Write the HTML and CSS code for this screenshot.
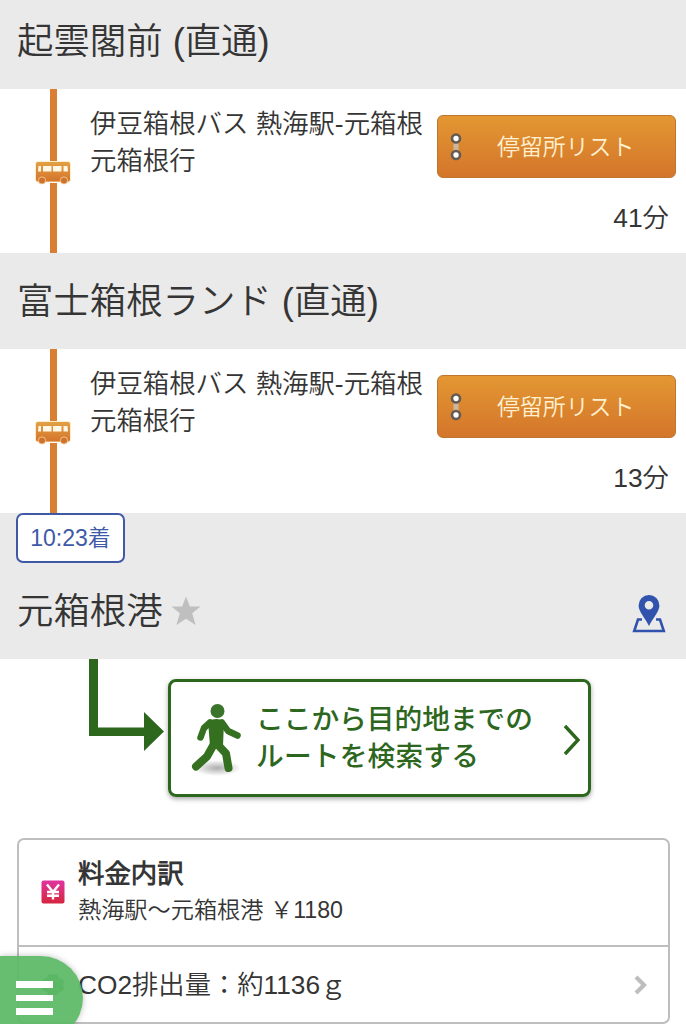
FILE: index.html
```html
<!DOCTYPE html>
<html lang="ja">
<head>
<meta charset="utf-8">
<title>元箱根港</title>
<link rel="stylesheet" href="styles.css">
</head>
<body>
<svg class="defs" width="0" height="0" aria-hidden="true">
  <defs>
    <linearGradient id="busFill" x1="0" y1="0" x2="0" y2="1"><stop offset="0" stop-color="#e3a044"/><stop offset="1" stop-color="#d4742b"/></linearGradient>
    <linearGradient id="yenFill" x1="0" y1="0" x2="0" y2="1"><stop offset="0" stop-color="#e035a0"/><stop offset="1" stop-color="#d5253f"/></linearGradient>
    <radialGradient id="shade"><stop offset="0" stop-color="#000" stop-opacity=".32"/><stop offset="1" stop-color="#000" stop-opacity="0"/></radialGradient>
    <symbol id="bus" viewBox="0 0 38 26">
      <path d="M4 2H34Q36 2 36 4V19.500Q36 21.500 34 21.500H4Q2 21.500 2 19.500V4Q2 2 4 2Z" fill="url(#busFill)" stroke="#fbe8bd" stroke-width="1.600" paint-order="stroke"/>
      <path d="M4.500 6H7V11.500H4ZM9 6H17.500V11.500H9ZM19 6H27.500V11.500H19ZM29.500 6H33.500L34 11.500H29.500Z" fill="#fff8e7"/>
      <g fill="#cf722c" stroke="#f8d5a5" stroke-width=".8"><circle cx="8" cy="20.500" r="3.600"/><circle cx="30" cy="20.500" r="3.600"/></g>
    </symbol>
    <symbol id="stops" viewBox="0 0 12 30">
      <path d="M3.500 6H8.500V24H3.500Z" fill="#cbb8a2"/>
      <g fill="#fff" stroke="#655b50" stroke-width="2.600"><circle cx="6" cy="6.500" r="4"/><circle cx="6" cy="23" r="4"/></g>
    </symbol>
  </defs>
</svg>
<main class="screen">
  <h2 class="station station-first">起雲閣前 (直通)</h2>
  <section class="segment">
    <div class="track"><span class="rail"></span><svg class="bus"><use href="#bus"/></svg><span class="rail rail-end"></span></div>
    <p class="line-name">伊豆箱根バス 熱海駅-元箱根<br>元箱根行</p>
    <div class="side">
      <a class="stop-button"><svg class="stops"><use href="#stops"/></svg><span class="stop-label">停留所リスト</span></a>
      <span class="minutes">41分</span>
    </div>
  </section>
  <h2 class="station">富士箱根ランド (直通)</h2>
  <section class="segment">
    <div class="track"><span class="rail"></span><svg class="bus"><use href="#bus"/></svg><span class="rail rail-end"></span></div>
    <p class="line-name">伊豆箱根バス 熱海駅-元箱根<br>元箱根行</p>
    <div class="side">
      <a class="stop-button"><svg class="stops"><use href="#stops"/></svg><span class="stop-label">停留所リスト</span></a>
      <span class="minutes">13分</span>
    </div>
  </section>
  <section class="arrival">
    <span class="time">10:23着</span>
    <div class="arrival-row">
      <h2 class="arrival-name">元箱根港</h2>
      <svg class="star" viewBox="0 0 30 30"><path d="M15 .5L18.900 10.500H29.500L21.200 17.300L24.600 29L15 22.800L5.400 29L8.800 17.300L.5 10.500H11.100Z" fill="#bfbfbf"/></svg>
      <svg class="map-pin" viewBox="0 0 34 40"><path d="M10 25.500H6L2.200 37H31.800L28 25.500H24" fill="none" stroke="#3253ad" stroke-width="2.600"/><path fill-rule="evenodd" d="M17 1A10.400 10.400 0 0 0 6.600 11.500C6.600 18 14 25 17 32C20 25 27.400 18 27.400 11.500A10.400 10.400 0 0 0 17 1ZM17 7A4.300 4.300 0 1 1 17 15.600A4.300 4.300 0 1 1 17 7Z" fill="#3253ad"/></svg>
    </div>
  </section>
  <section class="onward">
    <svg class="elbow" viewBox="0 0 76 94"><path d="M0 0H9V68.500H55V53L75 72.500L55 92V77H0Z" fill="#2d671e"/></svg>
    <a class="route-search">
      <svg class="walker" viewBox="0 0 54 74">
        <ellipse cx="27" cy="65" rx="24" ry="8" fill="url(#shade)"/>
        <circle cx="27.500" cy="8" r="7" fill="#3b742b"/>
        <path d="M18 18Q27 14 34 18L33 43H20Z" fill="#34701f"/>
        <g fill="none" stroke="#34701f" stroke-linecap="round" stroke-linejoin="round"><path d="M20 19.500L14 25L10.500 34.500" stroke-width="6.500"/><path d="M32 19.500L38 28L47.500 32.500" stroke-width="6.500"/><path d="M24 41L17 53.500L6 63.500M28 42L36 50.500L38.500 65" stroke-width="8"/></g>
      </svg>
      <span class="route-text"><span class="route-line1">ここから目的地までの</span><br><span class="route-line2">ルートを検索する</span></span>
      <svg class="route-arrow" viewBox="0 0 18 32"><path d="M2 2L15 16L2 30" fill="none" stroke="#2d671e" stroke-width="3.400"/></svg>
    </a>
  </section>
  <section class="details">
    <div class="fare">
      <svg class="yen" viewBox="0 0 24 24"><rect x=".5" y=".5" width="23" height="23" rx="2" fill="url(#yenFill)"/><path d="M6 4.500L12 12L18 4.500M12 11V19.500M6 12H18M6 15.800H18" fill="none" stroke="#fff" stroke-width="2.400"/></svg>
      <div><h3 class="fare-title">料金内訳</h3><p class="fare-text">熱海駅〜元箱根港 ￥1180</p></div>
    </div>
    <div class="co2">
      <svg class="leaf" viewBox="0 0 24 24"><path d="M12 2Q16-1 18 5Q25 6 22 12Q25 18 18 19Q16 25 12 21Q7 25 6 19Q-1 18 2 12Q-1 6 6 5Q8-1 12 2Z" fill="#46ac50"/><path d="M7 8H17V16H7Z" fill="none" stroke="#8fcf95" stroke-width="1.500"/></svg>
      <p class="co2-text">CO2排出量：約1136ｇ</p>
      <svg class="chevron" viewBox="0 0 14 20"><path d="M2 2L10 10L2 18" fill="none" stroke="#bebebe" stroke-width="4.200"/></svg>
    </div>
  </section>
  <button class="menu" aria-label="メニュー"><span class="bar"></span><span class="bar"></span><span class="bar"></span></button>
</main>
</body>
</html>
```
FILE: styles.css
```css
* { box-sizing: border-box; }
body { margin: 0; background: #fff; color: #353535; font-family: "Liberation Sans", "Noto Sans CJK JP DemiLight", "Noto Sans CJK JP", sans-serif; font-weight: 350; }
h2, h3, p { margin: 0; font-weight: inherit; }
.defs { position: absolute; }
.screen { position: relative; width: 686px; height: 1024px; overflow: hidden; }
.station { display: flex; align-items: center; height: 96px; padding: 2px 0 0 17px; background: #eaeaea; font-size: 36.400px; line-height: 50px; white-space: pre; }
.station-first { height: 89px; padding-top: 0; padding-bottom: 5px; }
.segment { display: flex; height: 164px; background: #fff; }
.track { display: flex; flex-direction: column; align-items: flex-start; width: 90px; padding-left: 16px; flex: none; }
.rail { width: 7px; height: 72px; margin-left: 33.500px; background: #d97e32; flex: none; }
.rail-end { height: auto; flex: 1; }
.bus { width: 38px; height: 26px; margin: -1px 0 -3px 18px; flex: none; }
.line-name { width: 347px; padding-top: 17px; flex: none; font-size: 26.400px; line-height: 37px; white-space: nowrap; }
.side { width: 239px; padding-top: 26px; flex: none; }
.stop-button { display: flex; align-items: center; width: 239px; height: 63px; padding-left: 12px; border: 1px solid #bd752f; border-radius: 6px; background: linear-gradient(#e39732, #d4752b); color: #fff0cf; }
.stops { width: 12px; height: 30px; }
.stop-label { margin-left: 35px; font-size: 22.900px; line-height: 34px; white-space: nowrap; }
.minutes { display: block; margin-top: 21px; padding-right: 7px; text-align: right; font-size: 26.400px; line-height: 38px; }
.arrival { height: 146px; padding-left: 16px; background: #eaeaea; }
.time { display: flex; align-items: center; justify-content: center; width: 109px; height: 50px; border: 2px solid #4059a6; border-radius: 7px; background: #fff; color: #3e59a8; font-size: 23px; line-height: 34px; }
.arrival-row { display: flex; align-items: center; height: 96px; padding-right: 20px; }
.arrival-name { padding: 2px 0 0 1px; font-size: 36.400px; line-height: 50px; }
.star { width: 30px; height: 30px; margin-left: 8px; margin-top: -1px; }
.map-pin { width: 34px; height: 40px; margin-left: auto; margin-top: 5px; }
.onward { display: flex; height: 179px; padding-left: 89px; }
.elbow { width: 76px; height: 94px; flex: none; }
.route-search { display: flex; align-items: center; width: 423px; height: 118px; margin: 20px 0 0 3px; border: 3px solid #2d671e; border-radius: 8px; box-shadow: 0 2px 5px rgba(0,0,0,.35); color: #2d671e; }
.walker { width: 54px; height: 74px; margin: 3px 0 0 19px; flex: none; }
.route-text { width: 280px; margin: 0 0 4px 12px; font-family: "Noto Sans CJK JP", sans-serif; font-size: 27.700px; line-height: 37px; white-space: nowrap; font-weight: 500; }
.route-line2 { letter-spacing: .2px; }
.route-arrow { width: 18px; height: 32px; margin-left: 27px; margin-top: 4px; flex: none; }
.details { width: 653px; height: 186px; margin-left: 16.500px; border: 2px solid #bebebe; border-radius: 7px; }
.fare { display: flex; align-items: center; height: 107px; padding-left: 22px; padding-bottom: 2px; border-bottom: 2px solid #bebebe; }
.yen { width: 24px; height: 24px; margin: 0 13.500px 0 0; }
.fare-title { font-size: 26.400px; line-height: 37px; font-weight: 700; }
.fare-text { font-size: 23.200px; line-height: 34px; white-space: nowrap; }
.co2 { display: flex; align-items: center; height: 76px; padding: 0 20px 0 22px; }
.leaf { width: 24px; height: 24px; margin-right: 13.500px; }
.co2-text { font-size: 26.300px; line-height: 38px; white-space: nowrap; }
.chevron { width: 14px; height: 20px; margin-left: auto; }
.menu { position: absolute; left: 0; top: 956px; display: flex; flex-direction: column; gap: 7px; width: 83px; height: 84px; padding: 25px 0 0 16px; border: 0; border-radius: 0 42px 42px 0; background: rgba(91,184,101,.93); box-shadow: 0 0 6px rgba(0,0,0,.25); }
.bar { width: 37px; height: 6.500px; background: #fff; flex: none; }
```
